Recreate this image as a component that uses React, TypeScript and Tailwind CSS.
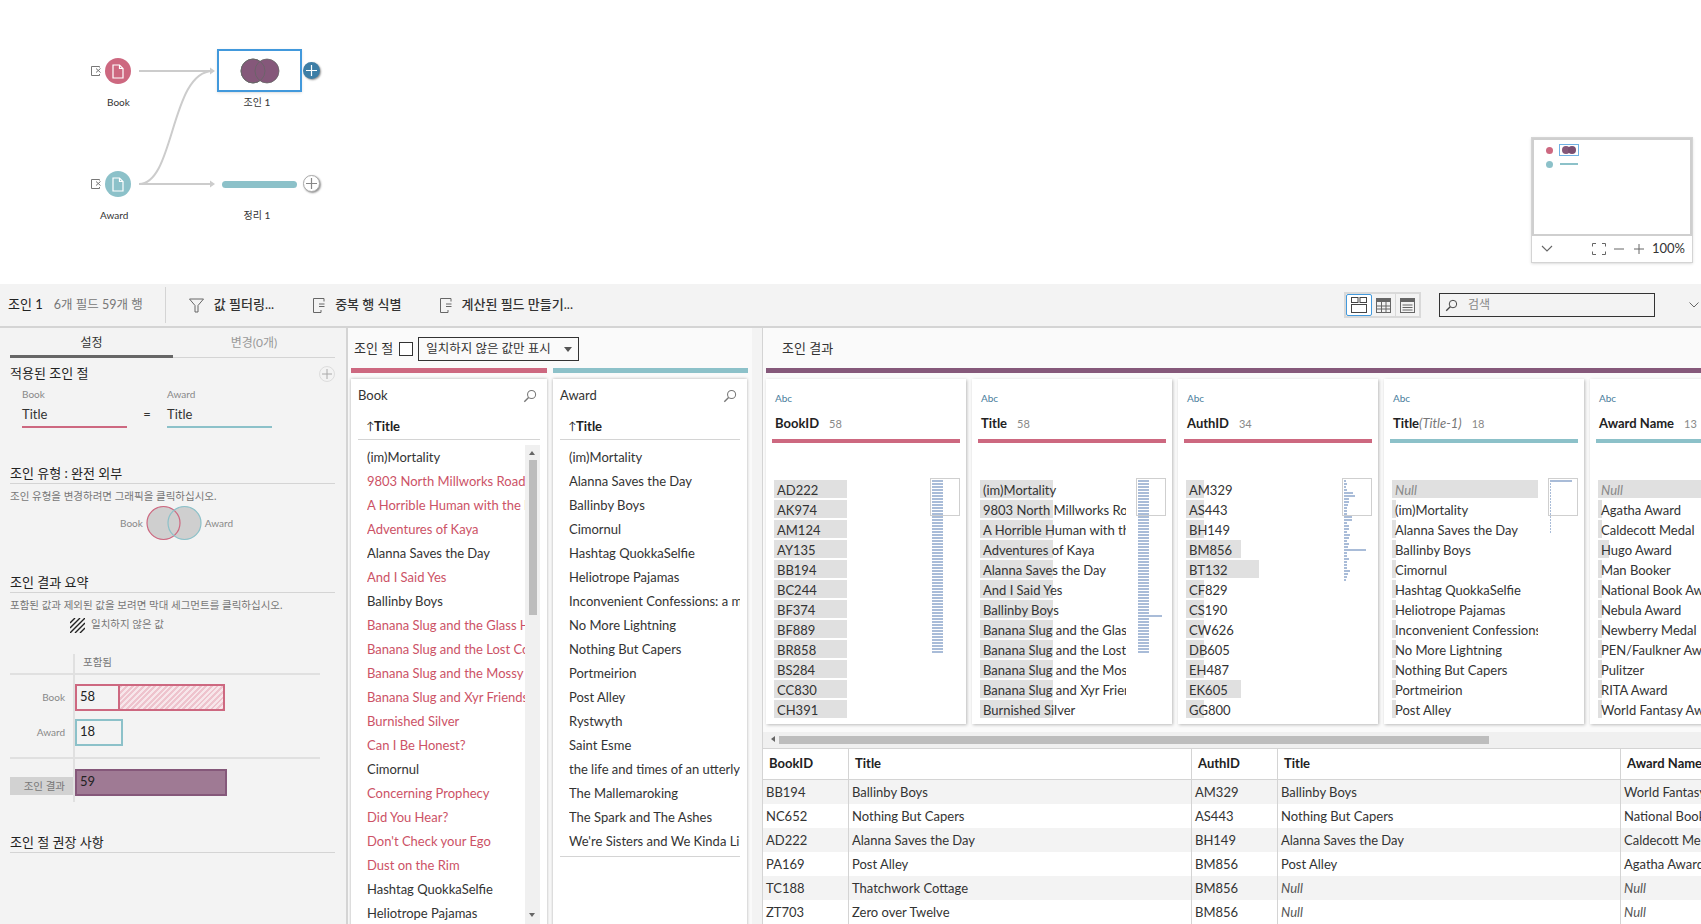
import React from 'react';

const font = "[font-family:Lato,'Noto_Sans_CJK_KR',sans-serif]";

const Magnifier = ({ className = 'w-4 h-4' }: { className?: string }) => (
  <svg className={className} viewBox="0 0 16 16" fill="none" stroke="currentColor" strokeWidth="1.2">
    <circle cx="9.8" cy="6.2" r="4.6" />
    <path d="M6.4 9.6 1.5 14.5" strokeWidth="1.6" />
  </svg>
);

const FileX = () => (
  <svg className="w-[10px] h-[10px] mr-[4px]" viewBox="0 0 10 10" fill="none" stroke="#777" strokeWidth="1">
    <path d="M8.500 1.500V.5h-8v9h8V8" />
    <path d="M5 2.500l4.500 4M9.500 2.500 5 6.500" />
  </svg>
);

const NodeFile = () => (
  <svg className="w-[12px] h-[15px]" viewBox="0 0 12 15" fill="none" stroke="#fff" strokeWidth="1.2">
    <path d="M1 1h6.500L11 4.500V14H1z" />
    <path d="M7.500 1v3.500H11" />
  </svg>
);

const DocLines = () => (
  <svg className="w-[12px] h-[15px]" viewBox="0 0 12 15" fill="none" stroke="#666" strokeWidth="1">
    <path d="M11 3.500V.5H.5v14H8V12" />
    <path d="M6 6h5.500M6 8.500h5.500" />
  </svg>
);

const PlusCircle = ({ dark }: { dark?: boolean }) => (
  <div className={`w-[17px] h-[17px] rounded-full flex items-center justify-center shadow-[1px_1px_2px_rgba(0,0,0,0.45)] ${dark ? 'bg-[#3d7ea6]' : 'bg-white border border-[#aaa]'}`}>
    <svg className="w-[11px] h-[11px]" viewBox="0 0 11 11" stroke={dark ? '#fff' : '#888'} strokeWidth="1.2">
      <path d="M5.500 0v11M0 5.500h11" />
    </svg>
  </div>
);

const FlowCanvas = () => (
  <div className="relative h-[284px] shrink-0 bg-white">
    <svg className="absolute left-0 top-0 w-[400px] h-[240px]" viewBox="0 0 400 240" fill="none" stroke="#cccccc" strokeWidth="2">
      <path d="M139 71H211" />
      <path d="M139 184H211" />
      <path d="M139 184C175 184 170 71 213 71" />
      <path d="M210 67.500 215 71 210 74.500z" fill="#cccccc" stroke="none" />
      <path d="M210 180.500 215 184 210 187.500z" fill="#cccccc" stroke="none" />
    </svg>

    <div className="absolute left-[91px] top-[58px] flex items-center">
      <FileX />
      <div className="w-[26px] h-[26px] rounded-full bg-[#cd6880] flex items-center justify-center"><NodeFile /></div>
    </div>
    <div className="absolute left-[107px] top-[95px] text-[10px] leading-[14px] text-[#333]">Book</div>

    <div className="absolute left-[91px] top-[171px] flex items-center">
      <FileX />
      <div className="w-[26px] h-[26px] rounded-full bg-[#8cc1c9] flex items-center justify-center"><NodeFile /></div>
    </div>
    <div className="absolute left-[100px] top-[208px] text-[10px] leading-[14px] text-[#333]">Award</div>

    <div className="absolute left-[217px] top-[49px] w-[85px] h-[43px] border-[2px] border-[#4299dc] flex items-center justify-center shadow-sm">
      <svg className="w-[42px] h-[26px]" viewBox="0 0 42 26">
        <circle cx="14" cy="13" r="12" fill="#85587a" stroke="#666" strokeWidth="0.8" />
        <circle cx="28" cy="13" r="12" fill="#85587a" stroke="#666" strokeWidth="0.8" />
        <circle cx="14" cy="13" r="12" fill="none" stroke="#666" strokeWidth="0.8" />
      </svg>
    </div>
    <div className="absolute left-[303px] top-[62px]"><PlusCircle dark /></div>
    <div className="absolute left-[217px] w-[80px] top-[95px] text-center text-[10px] leading-[14px] text-[#333]">조인 1</div>

    <div className="absolute left-[222px] top-[181px] w-[75px] h-[7px] rounded-full bg-[#8cc1c9]" />
    <div className="absolute left-[303px] top-[175px]"><PlusCircle /></div>
    <div className="absolute left-[217px] w-[80px] top-[208px] text-center text-[10px] leading-[14px] text-[#333]">정리 1</div>

    <div className="absolute left-[1531px] top-[137px] w-[162px] h-[126px] border border-[#d4d4d4] bg-white flex flex-col shadow-sm">
      <div className="relative h-[98px] border-2 border-[#cfcfcf]">
        <div className="absolute left-[12px] top-[7px] w-[7px] h-[7px] rounded-full bg-[#cd6880]" />
        <div className="absolute left-[12px] top-[21px] w-[7px] h-[7px] rounded-full bg-[#8cc1c9]" />
        <div className="absolute left-[25px] top-[4px] w-[20px] h-[12px] border border-[#6fb1e4] flex items-center justify-center">
          <svg className="w-[14px] h-[8px]" viewBox="0 0 14 8"><circle cx="4" cy="4" r="4" fill="#85587a" /><circle cx="10" cy="4" r="4" fill="#7b4f70" /></svg>
        </div>
        <div className="absolute left-[26px] top-[23px] w-[18px] h-[2px] bg-[#8cc1c9]" />
      </div>
      <div className="flex-1 flex items-center pl-[9px] pr-[7px] text-[13px] text-[#333]">
        <svg className="w-[12px] h-[8px]" viewBox="0 0 12 8" fill="none" stroke="#666" strokeWidth="1.1"><path d="M1 1l5 5 5-5" /></svg>
        <svg className="w-[14px] h-[12px] ml-[39px]" viewBox="0 0 14 12" fill="none" stroke="#666"><path d="M4 .5H.5v3M10 .5h3.500v3M4 11.500H.5v-3M10 11.500h3.500v-3" /></svg>
        <svg className="w-[10px] h-[2px] ml-[8px]" viewBox="0 0 10 2" stroke="#666"><path d="M0 1h10" /></svg>
        <svg className="w-[10px] h-[10px] ml-[10px]" viewBox="0 0 10 10" stroke="#666"><path d="M0 5h10M5 0v10" /></svg>
        <span className="ml-auto">100%</span>
      </div>
    </div>
  </div>
);

const ToolButton = ({ icon, label, className }: { icon: React.ReactNode; label: string; className: string }) => (
  <div className={`flex items-center gap-[10px] ${className}`}>
    {icon}
    <span className="text-[13px] font-medium text-[#333]">{label}</span>
  </div>
);

const Toolbar = () => (
  <div className="h-[44px] shrink-0 bg-[#f3f3f3] border-b-2 border-[#d4d4d4] flex items-center pl-[8px]">
    <span className="text-[13px] text-[#222]">조인 1</span>
    <span className="ml-[11px] w-[96px] text-[12.500px] text-[#777]">6개 필드 59개 행</span>
    <div className="w-px h-[36px] bg-[#d4d4d4] ml-[15px]" />
    <ToolButton
      className="ml-[23px]"
      label="값 필터링..."
      icon={
        <svg className="w-[15px] h-[15px]" viewBox="0 0 15 15" fill="none" stroke="#666"><path d="M.5 1h14L9 7.500V14H6V7.500z" /></svg>
      }
    />
    <ToolButton className="ml-[39px]" label="중복 행 식별" icon={<DocLines />} />
    <ToolButton className="ml-[38px]" label="계산된 필드 만들기..." icon={<DocLines />} />

    <div className="ml-auto flex items-center border-2 border-[#d9d9d9] h-[26px] w-[77px]">
      <div className="w-[26px] h-full border border-[#4299dc] rounded-[2px] bg-white flex items-center justify-center">
        <svg className="w-[16px] h-[16px]" viewBox="0 0 16 16" fill="none" stroke="#444"><rect x=".5" y=".5" width="6.500" height="5" /><rect x="9" y=".5" width="6.500" height="5" /><rect x=".5" y="7.500" width="15" height="8" /></svg>
      </div>
      <div className="w-[24px] h-full border-r border-[#d9d9d9] flex items-center justify-center">
        <svg className="w-[15px] h-[15px]" viewBox="0 0 15 15" fill="none" stroke="#666"><rect x=".5" y=".5" width="14" height="14" /><path d="M.5 2.500h14" strokeWidth="3" /><path d="M.5 8h14M.5 11h14M5.500 4v11M10 4v11" /></svg>
      </div>
      <div className="flex-1 flex items-center justify-center">
        <svg className="w-[15px] h-[15px]" viewBox="0 0 15 15" fill="none" stroke="#666"><rect x=".5" y=".5" width="14" height="14" /><path d="M.5 2.500h14" strokeWidth="3" /><path d="M2.500 7h10M2.500 9.500h10M2.500 12h10" /></svg>
      </div>
    </div>
    <div className="ml-[18px] w-[216px] h-[24px] border-[1.5px] border-[#333] flex items-center pl-[5px] text-[#444]">
      <Magnifier className="w-[13px] h-[13px]" />
      <span className="ml-[10px] text-[12px] text-[#888]">검색</span>
    </div>
    <svg className="ml-[34px] mr-[2px] w-[10px] h-[6px]" viewBox="0 0 10 6" fill="none" stroke="#666"><path d="M.5.5 5 5 9.500.5" /></svg>
  </div>
);

const SectionTitle = ({ children, className = '' }: { children: React.ReactNode; className?: string }) => (
  <div className={`mx-[10px] w-[325px] h-[20px] border-b border-[#d4d4d4] text-[13px] leading-[19px] text-[#222] ${className}`}>{children}</div>
);

const SettingsPanel = () => (
  <div className="w-[348px] shrink-0 bg-[#f3f3f3] border-r-2 border-[#d4d4d4] overflow-hidden">
    <div className="flex mx-[10px] w-[325px] h-[30px] border-b border-[#d4d4d4]">
      <div className="w-[163px] h-[30px] border-b-[3px] border-[#666] text-center text-[12px] leading-[30px] text-[#333]">설정</div>
      <div className="flex-1 text-center text-[12px] leading-[30px] text-[#999]">변경(0개)</div>
    </div>

    <div className="flex items-center justify-between mx-[10px] w-[325px] h-[20px] mt-[6px] text-[13px] text-[#222]">
      <span>적용된 조인 절</span>
      <div className="w-[16px] h-[16px] rounded-full border border-[#ddd] flex items-center justify-center">
        <svg className="w-[10px] h-[10px]" viewBox="0 0 10 10" stroke="#aaa"><path d="M5 0v10M0 5h10" /></svg>
      </div>
    </div>

    <div className="flex pl-[22px] mt-[3px]">
      <div className="w-[105px]">
        <div className="text-[10px] leading-[14px] text-[#888]">Book</div>
        <div className="h-[27px] border-b-2 border-[#cd6880] text-[13px] leading-[27px] text-[#333]">Title</div>
      </div>
      <div className="w-[40px] pt-[14px] text-center text-[13px] leading-[27px] text-[#333]">=</div>
      <div className="w-[105px]">
        <div className="text-[10px] leading-[14px] text-[#888]">Award</div>
        <div className="h-[27px] border-b-2 border-[#8cc1c9] text-[13px] leading-[27px] text-[#333]">Title</div>
      </div>
    </div>

    <SectionTitle className="mt-[36px]">조인 유형 : 완전 외부</SectionTitle>
    <div className="mx-[10px] mt-[4px] text-[10.500px] leading-[16px] text-[#777]">조인 유형을 변경하려면 그래픽을 클릭하십시오.</div>
    <div className="flex items-center pl-[120px] mt-[1px] h-[36px] text-[10px] text-[#888]">
      <span>Book</span>
      <svg className="w-[56px] h-[36px] ml-[3px]" viewBox="0 0 56 36">
        <circle cx="17.500" cy="18" r="16.500" fill="#cfcfcf" />
        <circle cx="38.500" cy="18" r="16.500" fill="#cfcfcf" />
        <circle cx="17.500" cy="18" r="16.500" fill="none" stroke="#cd6880" strokeWidth="1.200" />
        <circle cx="38.500" cy="18" r="16.500" fill="none" stroke="#8cc1c9" strokeWidth="1.200" />
      </svg>
      <span className="ml-[3px]">Award</span>
    </div>

    <SectionTitle className="mt-[32px]">조인 결과 요약</SectionTitle>
    <div className="mx-[10px] mt-[4px] text-[10.500px] leading-[16px] text-[#777]">포함된 값과 제외된 값을 보려면 막대 세그먼트를 클릭하십시오.</div>
    <div className="flex items-center pl-[70px] mt-[3px] h-[18px] text-[10.500px] text-[#777]">
      <svg className="w-[15px] h-[15px] mr-[6px]" viewBox="0 0 15 15" stroke="#222" strokeWidth="1.400">
        <path d="M0 5 5 0M0 10 10 0M0 15 15 0M5 15 15 5M10 15l5-5" />
      </svg>
      일치하지 않은 값
    </div>

    <div className="relative mt-[20px] h-[148px]">
      <div className="absolute left-[73px] top-0 bottom-0 w-[2px] bg-[#e0e0e0]" />
      <div className="pl-[83px] h-[19px] text-[10.500px] leading-[16px] text-[#777]">포함됨</div>
      <div className="ml-[10px] w-[310px] h-[2px] bg-[#e0e0e0]" />
      <div className="flex items-center mt-[9px] h-[27px]">
        <div className="w-[65px] text-right text-[10px] text-[#888]">Book</div>
        <div className="ml-[10px] w-[150px] h-[27px] flex border-2 border-[#cd6880]">
          <div className="w-[43px] border-r-2 border-[#cd6880] pl-[3px] text-[13px] leading-[21px] text-[#222]">58</div>
          <div className="flex-1 bg-[repeating-linear-gradient(135deg,#eec3cd_0,#eec3cd_2px,#f7e6ea_2px,#f7e6ea_4px)]" />
        </div>
      </div>
      <div className="flex items-center mt-[8px] h-[27px]">
        <div className="w-[65px] text-right text-[10px] text-[#888]">Award</div>
        <div className="ml-[10px] w-[48px] h-[27px] border-2 border-[#8cc1c9] pl-[3px] text-[13px] leading-[21px] text-[#222]">18</div>
      </div>
      <div className="ml-[10px] mt-[11px] w-[310px] h-[2px] bg-[#e0e0e0]" />
      <div className="flex items-center mt-[10px] h-[27px]">
        <div className="ml-[10px] w-[63px] h-[18px] mt-[6px] pr-[8px] bg-[#d2d2d2] text-right text-[10.500px] leading-[18px] text-[#777]">조인 결과</div>
        <div className="ml-[2px] w-[152px] h-[27px] border-2 border-[#85587a] bg-[#9f7a94] pl-[3px] text-[13px] leading-[21px] text-[#222]">59</div>
      </div>
    </div>

    <SectionTitle className="mt-[31px]">조인 절 권장 사항</SectionTitle>
  </div>
);

const bookTitles: [string, boolean][] = [
  ['(im)Mortality', false],
  ['9803 North Millworks Road', true],
  ['A Horrible Human with the Head of a Wolf', true],
  ['Adventures of Kaya', true],
  ['Alanna Saves the Day', false],
  ['And I Said Yes', true],
  ['Ballinby Boys', false],
  ['Banana Slug and the Glass Half Full', true],
  ['Banana Slug and the Lost Cow', true],
  ['Banana Slug and the Mossy Rock', true],
  ['Banana Slug and Xyr Friends', true],
  ['Burnished Silver', true],
  ['Can I Be Honest?', true],
  ['Cimornul', false],
  ['Concerning Prophecy', true],
  ['Did You Hear?', true],
  ["Don't Check your Ego", true],
  ['Dust on the Rim', true],
  ['Hashtag QuokkaSelfie', false],
  ['Heliotrope Pajamas', false],
];

const awardTitles = [
  '(im)Mortality',
  'Alanna Saves the Day',
  'Ballinby Boys',
  'Cimornul',
  'Hashtag QuokkaSelfie',
  'Heliotrope Pajamas',
  'Inconvenient Confessions: a memoir',
  'No More Lightning',
  'Nothing But Capers',
  'Portmeirion',
  'Post Alley',
  'Rystwyth',
  'Saint Esme',
  'the life and times of an utterly',
  'The Mallemaroking',
  'The Spark and The Ashes',
  "We're Sisters and We Kinda Like Each Other",
];

const ListCard = ({ name, className, children }: { name: string; className: string; children: React.ReactNode }) => (
  <div className={`bg-white shadow-[0_0_3px_rgba(0,0,0,0.3)] flex flex-col overflow-hidden ${className}`}>
    <div className="flex items-center justify-between h-[34px] pl-[7px] pr-[10px] text-[13px] text-[#333]">
      {name}
      <Magnifier className="w-[14px] h-[14px] text-[#777]" />
    </div>
    <div className="mx-[7px] h-[27px] border-b border-[#d4d4d4] pl-[8px] pt-[1px] flex items-center text-[13px] font-bold text-[#222]">
      <span className="w-[8px] text-[11px] font-normal">↑</span>Title
    </div>
    {children}
  </div>
);

const ClauseRow = ({ text, missing }: { text: string; missing?: boolean }) => (
  <div className={`h-[24px] whitespace-nowrap overflow-hidden text-[13px] leading-[24px] ${missing ? 'text-[#cc5266]' : 'text-[#333]'}`}>{text}</div>
);

const ClausePanel = () => (
  <div className="w-[404px] shrink-0 bg-[#fafafa] overflow-hidden">
    <div className="h-[40px] flex items-center pl-[6px] pt-[2px] text-[13px] text-[#333]">
      조인 절
      <div className="ml-[6px] w-[14px] h-[14px] border border-[#333] bg-white" />
      <div className="ml-[5px] w-[161px] h-[24px] border-[1.5px] border-[#333] flex items-center pl-[7px] text-[12.500px]">
        일치하지 않은 값만 표시
        <span className="ml-auto mr-[6px] w-0 h-0 border-x-[4px] border-x-transparent border-t-[5px] border-t-[#555]" />
      </div>
    </div>
    <div className="flex pl-[3px] gap-[6px]">
      <div className="w-[196px] h-[5px] bg-[#cd6880]" />
      <div className="w-[195px] h-[5px] bg-[#8cc1c9]" />
    </div>
    <div className="flex pl-[3px] gap-[6px] mt-[6px]">
      <ListCard name="Book" className="w-[196px] h-[560px]">
        <div className="flex mt-[5px] ml-[16px] mr-[7px]">
          <div className="w-[158px] shrink-0">
            {bookTitles.map(([t, m]) => <ClauseRow key={t} text={t} missing={m} />)}
          </div>
          <div className="relative w-[15px] h-[480px] bg-[#f0f0f0] shrink-0">
            <span className="absolute left-[4px] top-[6px] w-0 h-0 border-x-[3.500px] border-x-transparent border-b-[4px] border-b-[#666]" />
            <div className="absolute left-[4px] top-[15px] w-[8px] h-[155px] bg-[#bdbdbd]" />
            <span className="absolute left-[4px] top-[468px] w-0 h-0 border-x-[3.500px] border-x-transparent border-t-[4px] border-t-[#666]" />
          </div>
        </div>
      </ListCard>
      <ListCard name="Award" className="w-[194px] h-[560px]">
        <div className="mt-[5px] mx-[7px] border-b border-[#d4d4d4] pl-[9px] pb-[3px]">
          {awardTitles.map((t) => <ClauseRow key={t} text={t} />)}
        </div>
      </ListCard>
    </div>
  </div>
);

const stripes58 = Array.from({ length: 58 }, () => 11);
const bookStripes = Array.from({ length: 58 }, (_, i) => (i === 45 ? 24 : 11));
const authStripes = [2, 3, 2, 3, 9, 11, 5, 5, 4, 3, 3, 3, 8, 8, 3, 5, 5, 3, 6, 5, 3, 5, 4, 22, 3, 3, 5, 3, 3, 3, 6, 4, 3, 2];

interface Profile {
  name: React.ReactNode;
  count: string;
  color: string;
  rows: { label: string; width: number; isNull?: boolean }[];
  stripes?: number[];
}

const authWidths = [18, 18, 18, 55, 73, 18, 18, 18, 18, 18, 55, 18];

const profiles: Profile[] = [
  {
    name: 'BookID',
    count: '58',
    color: 'bg-[#cd6880]',
    rows: ['AD222', 'AK974', 'AM124', 'AY135', 'BB194', 'BC244', 'BF374', 'BF889', 'BR858', 'BS284', 'CC830', 'CH391'].map((label) => ({ label, width: 73 })),
    stripes: stripes58,
  },
  {
    name: 'Title',
    count: '58',
    color: 'bg-[#cd6880]',
    rows: ['(im)Mortality', '9803 North Millworks Road', 'A Horrible Human with the Head', 'Adventures of Kaya', 'Alanna Saves the Day', 'And I Said Yes', 'Ballinby Boys', 'Banana Slug and the Glass Half', 'Banana Slug and the Lost Cow', 'Banana Slug and the Mossy Rock', 'Banana Slug and Xyr Friends', 'Burnished Silver'].map((label) => ({ label, width: 73 })),
    stripes: bookStripes,
  },
  {
    name: 'AuthID',
    count: '34',
    color: 'bg-[#cd6880]',
    rows: ['AM329', 'AS443', 'BH149', 'BM856', 'BT132', 'CF829', 'CS190', 'CW626', 'DB605', 'EH487', 'EK605', 'GG800'].map((label, i) => ({ label, width: authWidths[i] })),
    stripes: authStripes,
  },
  {
    name: (
      <>
        Title<span className="font-normal italic text-[#777]">(Title-1)</span>
      </>
    ),
    count: '18',
    color: 'bg-[#8cc1c9]',
    rows: [
      { label: 'Null', width: 146, isNull: true },
      ...['(im)Mortality', 'Alanna Saves the Day', 'Ballinby Boys', 'Cimornul', 'Hashtag QuokkaSelfie', 'Heliotrope Pajamas', 'Inconvenient Confessions', 'No More Lightning', 'Nothing But Capers', 'Portmeirion', 'Post Alley'].map((label) => ({ label, width: 4 })),
    ],
    stripes: [22, ...Array.from({ length: 17 }, () => 1)],
  },
  {
    name: 'Award Name',
    count: '13',
    color: 'bg-[#8cc1c9]',
    rows: [
      { label: 'Null', width: 146, isNull: true },
      { label: 'Agatha Award', width: 4 },
      { label: 'Caldecott Medal', width: 4 },
      { label: 'Hugo Award', width: 11 },
      { label: 'Man Booker', width: 4 },
      { label: 'National Book Award', width: 4 },
      { label: 'Nebula Award', width: 4 },
      { label: 'Newberry Medal', width: 4 },
      { label: 'PEN/Faulkner Award', width: 4 },
      { label: 'Pulitzer', width: 4 },
      { label: 'RITA Award', width: 4 },
      { label: 'World Fantasy Award', width: 4 },
    ],
  },
];

const ProfileCard = ({ profile }: { profile: Profile }) => (
  <div className="w-[200px] h-[345px] shrink-0 bg-white shadow-[1px_1px_3px_rgba(0,0,0,0.25)] overflow-hidden">
    <div className="pl-[9px] pt-[12px] text-[10px] leading-[14px] text-[#4a7d9c]">Abc</div>
    <div className="flex items-center pl-[9px] h-[20px] mt-[9px]">
      <span className="text-[13px] font-bold text-[#222]">{profile.name}</span>
      <span className="ml-[10px] text-[11px] text-[#888]">{profile.count}</span>
    </div>
    <div className={`mx-[6px] mt-[5px] h-[4px] ${profile.color}`} />
    <div className="relative mt-[37px] ml-[8px]">
      {profile.rows.map((row) => (
        <div key={row.label} className="relative h-[18px] mb-[2px] w-[146px] overflow-hidden">
          <div className="absolute inset-y-0 left-0 bg-[#e0e0e0]" style={{ width: row.width }} />
          <div className={`relative pl-[3px] text-[13px] leading-[20px] whitespace-nowrap ${row.isNull ? 'italic text-[#888]' : 'text-[#333]'}`}>{row.label}</div>
        </div>
      ))}
      {profile.stripes && (
        <div className="absolute left-[158px] top-0 flex flex-col gap-px">
          {profile.stripes.map((w, i) => (
            <div key={i} className="h-[2px] bg-[#a9bcd8]" style={{ width: w }} />
          ))}
        </div>
      )}
      {profile.stripes && (
        <div className="absolute left-[156px] top-[-2px] w-[30px] h-[38px] border border-[#cfcfcf]" />
      )}
    </div>
  </div>
);

const tableRows = [
  ['BB194', 'Ballinby Boys', 'AM329', 'Ballinby Boys', 'World Fantasy Award'],
  ['NC652', 'Nothing But Capers', 'AS443', 'Nothing But Capers', 'National Book Award'],
  ['AD222', 'Alanna Saves the Day', 'BH149', 'Alanna Saves the Day', 'Caldecott Medal'],
  ['PA169', 'Post Alley', 'BM856', 'Post Alley', 'Agatha Award'],
  ['TC188', 'Thatchwork Cottage', 'BM856', 'Null', 'Null'],
  ['ZT703', 'Zero over Twelve', 'BM856', 'Null', 'Null'],
];

const colClasses = ['w-[86px]', 'w-[343px]', 'w-[86px]', 'w-[343px]', 'w-[120px]'];
const headers = ['BookID', 'Title', 'AuthID', 'Title', 'Award Name'];

const ResultsPanel = () => (
  <div className="flex-1 min-w-0 ml-[10px] bg-[#fafafa] border-l border-[#d4d4d4] overflow-hidden flex flex-col">
    <div className="h-[40px] flex items-center pl-[19px] pt-[1px] text-[13px] text-[#333] shrink-0">조인 결과</div>
    <div className="ml-[3px] h-[5px] bg-[#85587a] shrink-0" />
    <div className="flex gap-[6px] pl-[3px] mt-[6px] h-[345px] shrink-0">
      {profiles.map((p) => <ProfileCard key={p.count + p.color} profile={p} />)}
    </div>
    <div className="relative h-[16px] mt-[8px] bg-[#f0f0f0] shrink-0">
      <span className="absolute left-[8px] top-[4px] w-0 h-0 border-y-[3.500px] border-y-transparent border-r-[4px] border-r-[#666]" />
      <div className="absolute left-[16px] top-[4px] w-[710px] h-[8px] bg-[#bdbdbd]" />
    </div>
    <div className="flex h-[32px] bg-white border-y border-[#d4d4d4] shrink-0">
      {headers.map((h, i) => (
        <div key={i} className={`${colClasses[i]} shrink-0 flex items-center pl-[6px] text-[13px] font-bold text-[#222] border-r border-[#d4d4d4]`}>{h}</div>
      ))}
    </div>
    {tableRows.map((row, r) => (
      <div key={r} className={`flex h-[24px] shrink-0 ${r % 2 === 0 ? 'bg-[#f3f3f3]' : 'bg-white'}`}>
        {row.map((cell, i) => (
          <div key={i} className={`${colClasses[i]} shrink-0 overflow-hidden whitespace-nowrap pl-[3px] text-[13px] leading-[24px] border-r border-[#d4d4d4] ${cell === 'Null' ? 'italic text-[#555]' : 'text-[#333]'}`}>{cell}</div>
        ))}
      </div>
    ))}
  </div>
);

export default function App() {
  return (
    <div className={`w-[1701px] h-[924px] overflow-hidden flex flex-col bg-white ${font}`}>
      <FlowCanvas />
      <Toolbar />
      <div className="flex flex-1 min-h-0 bg-[#f3f3f3]">
        <SettingsPanel />
        <ClausePanel />
        <ResultsPanel />
      </div>
    </div>
  );
}
